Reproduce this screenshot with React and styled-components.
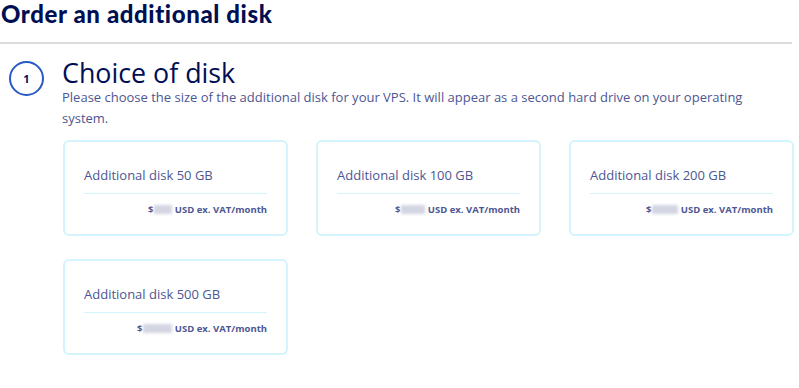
import styled, { createGlobalStyle } from "styled-components";

const GlobalStyle = createGlobalStyle`
  body {
    margin: 0;
    background: #fff;
    font-family: "Open Sans", Lato, sans-serif;
    color: #000e54;
  }
`;

const disks = [
  { size: "50 GB", hidden: 18 },
  { size: "100 GB", hidden: 24 },
  { size: "200 GB", hidden: 26 },
  { size: "500 GB", hidden: 29 },
];

export default function App() {
  return (
    <Page>
      <GlobalStyle />
      <Title>Order an additional disk</Title>
      <Rule />
      <Step>
        <StepNumber>1</StepNumber>
        <StepBody>
          <StepTitle>Choice of disk</StepTitle>
          <StepText>
            Please choose the size of the additional disk for your VPS. It will appear as a second
            hard drive on your operating system.
          </StepText>
        </StepBody>
      </Step>
      <CardGrid>
        {disks.map((disk) => (
          <Card key={disk.size}>
            <CardTitle>Additional disk {disk.size}</CardTitle>
            <Price>
              $<Blur style={{ width: disk.hidden }} /> USD ex. VAT/month
            </Price>
          </Card>
        ))}
      </CardGrid>
    </Page>
  );
}

const Page = styled.div`
  width: 799px;
  height: 388px;
  padding-top: 2px;
  overflow: hidden;
  box-sizing: border-box;
`;

const Title = styled.h1`
  margin: 0;
  padding: 0 0 0 1px;
  font-family: Lato, sans-serif;
  font-size: 24px;
  font-weight: 900;
  line-height: 24px;
  letter-spacing: 0.6px;
  color: #000e54;
`;

const Rule = styled.hr`
  margin: 16px 0 0 0;
  width: 792px;
  border: none;
  border-top: 2px solid #dcdcdc;
`;

const Step = styled.div`
  display: flex;
  gap: 18px;
  margin-top: 15px;
  padding-left: 9px;
`;

const StepNumber = styled.div`
  flex: none;
  width: 31px;
  height: 31px;
  border: 2px solid #2859c5;
  border-radius: 50%;
  display: flex;
  align-items: center;
  justify-content: center;
  font-size: 11px;
  font-weight: 700;
  color: #000e54;
  margin-top: 2px;
`;

const StepBody = styled.div`
  display: flex;
  flex-direction: column;
`;

const StepTitle = styled.h2`
  margin: 0;
  font-size: 26.8px;
  font-weight: 400;
  line-height: 28px;
  color: #000e54;
`;

const StepText = styled.p`
  margin: 0;
  width: 700px;
  font-size: 13px;
  line-height: 21px;
  color: #4d5693;
`;

const CardGrid = styled.div`
  display: grid;
  grid-template-columns: repeat(3, 225px);
  column-gap: 28px;
  row-gap: 23px;
  margin: 11px 0 0 63px;
`;

const Card = styled.div`
  box-sizing: border-box;
  height: 96px;
  border: 2px solid #d4f4fd;
  border-radius: 6px;
  padding: 23px 19px 0 19px;
  display: flex;
  flex-direction: column;
`;

const CardTitle = styled.div`
  font-size: 13px;
  line-height: 20px;
  color: #4d5693;
  padding-bottom: 8px;
  border-bottom: 1px solid #d4f4fd;
`;

const Price = styled.div`
  margin-top: 9px;
  font-size: 9.5px;
  font-weight: 700;
  color: #4d5693;
  display: flex;
  justify-content: flex-end;
  align-items: center;
  white-space: pre;
`;

const Blur = styled.span`
  display: inline-block;
  height: 9px;
  background: #d3d5e2;
  filter: blur(1.5px);
  margin-left: 1px;
`;
